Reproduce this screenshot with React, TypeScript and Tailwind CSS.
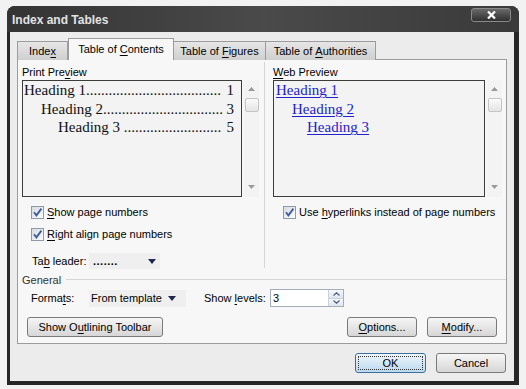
import React from "react";

const U = ({ children }: { children: React.ReactNode }) => (
  <span className="underline decoration-1 underline-offset-[2px]">{children}</span>
);

function Check() {
  return (
    <span className="w-[13px] h-[13px] border border-[#8f9aa6] bg-linear-to-br from-[#d8dce0] to-[#fbfbfb] flex items-center justify-center shrink-0">
      <svg width="11" height="11" viewBox="0 0 11 11">
        <path d="M2 5.2 L4.4 8.4 L9.4 1.6" fill="none" stroke="#3d5c9e" strokeWidth="1.8" />
      </svg>
    </span>
  );
}

function Arrow() {
  return (
    <svg width="8" height="5" viewBox="0 0 8 5" className="shrink-0">
      <path d="M0 0 H8 L4 5 Z" fill="#1f2a4f" />
    </svg>
  );
}

function VScroll() {
  return (
    <div className="w-[15px] h-[117px] bg-[#f3f3f3] flex flex-col items-center">
      <svg width="7" height="4" viewBox="0 0 7 4" className="mt-[7px]">
        <path d="M0 4 L3.5 0 L7 4 Z" fill="#9a9a9a" />
      </svg>
      <div className="mt-[7px] w-[14px] h-[14px] border border-[#c4c4c4] rounded-[2px] bg-linear-to-b from-[#fbfbfb] to-[#e4e4e4]" />
      <div className="flex-1" />
      <svg width="7" height="4" viewBox="0 0 7 4" className="mb-[8px]">
        <path d="M0 0 L3.5 4 L7 0 Z" fill="#9a9a9a" />
      </svg>
    </div>
  );
}

function TocRow({ indent, text, num }: { indent: number; text: string; num: string }) {
  return (
    <div className="flex h-[18.5px] items-center whitespace-nowrap leading-[18px]" style={{ paddingLeft: indent }}>
      <span>{text}</span>
      <span className="ml-auto">{num}</span>
    </div>
  );
}

function Btn({ children, w, primary }: { children: React.ReactNode; w: string; primary?: boolean }) {
  if (primary) {
    return (
      <div className={`${w} h-[20px] rounded-[3px] border border-[#3c6e9e] bg-linear-to-b from-[#eef6fc] to-[#bcd9ef] p-[2px]`}>
        <div className="w-full h-full border border-dotted border-[#333] flex items-center justify-center leading-[14px]">{children}</div>
      </div>
    );
  }
  return (
    <div className={`${w} h-[20px] rounded-[3px] border border-[#7a7a7a] bg-linear-to-b from-[#f6f6f6] to-[#d6d6d6] flex items-center justify-center leading-[14px]`}>
      {children}
    </div>
  );
}

export default function App() {
  return (
    <div
      className="w-[526px] h-[389px] bg-[#f2f2f2] pl-[7px] pt-[6px] text-[11px] leading-[14px] text-black"
      style={{ fontFamily: '"Liberation Sans", Arial, sans-serif' }}
    >
      <div className="w-[512px] h-[379px] rounded-t-[8px] bg-[#262626] flex flex-col pl-[3px] pr-[5px] pb-[4px]">
        {/* Title bar */}
        <div className="h-[26px] -ml-[3px] -mr-[5px] rounded-t-[8px] bg-linear-to-r from-[#343434] via-[#4a4a4a] to-[#3a3a3a] flex items-start justify-between">
          <span className="pl-[5px] mt-[6px] text-[12px] font-bold text-[#e2e2e2] leading-[16px]">Index and Tables</span>
          <div className="mt-[2px] mr-[8px] w-[40px] h-[14px] rounded-[3px] border border-[#8a8a8a] bg-linear-to-b from-[#6a6a6a] to-[#303030] flex items-center justify-center">
            <svg width="9" height="8" viewBox="0 0 9 8">
              <path d="M1 0.5 L8 7.5 M8 0.5 L1 7.5" stroke="#ffffff" strokeWidth="2.2" />
            </svg>
          </div>
        </div>
        {/* Client */}
        <div className="flex-1 bg-[#ececec] pl-[7px] pr-[7px] pt-[6px] flex flex-col">
          {/* Tabs */}
          <div className="h-[22px] flex items-end -mb-px relative z-10">
            <div className="w-[51px] h-[19px] border border-[#9c9c9c] border-b-0 bg-linear-to-b from-[#e6e6e6] to-[#cfcfcf] flex items-center justify-center">
              Inde<U>x</U>
            </div>
            <div className="w-[106px] h-[22px] border border-[#9c9c9c] border-b-0 bg-[#f7f7f7] flex items-center justify-center pb-[2px]">
              Table of&nbsp;<U>C</U>ontents
            </div>
            <div className="w-[92px] h-[19px] border border-[#9c9c9c] border-b-0 border-l-0 bg-linear-to-b from-[#e6e6e6] to-[#cfcfcf] flex items-center justify-center">
              Table of&nbsp;<U>F</U>igures
            </div>
            <div className="w-[110px] h-[19px] border border-[#9c9c9c] border-b-0 border-l-0 bg-linear-to-b from-[#e6e6e6] to-[#cfcfcf] flex items-center justify-center">
              Table of&nbsp;<U>A</U>uthorities
            </div>
          </div>
          {/* Panel */}
          <div className="w-[490px] h-[285px] border border-[#9c9c9c] bg-[#f7f7f7] flex flex-col">
            <div className="h-[210px] flex">
              {/* Left column */}
              <div className="w-[246px] pl-[4px] pt-[4px] flex flex-col">
                <div className="h-[16px] leading-[16px]">
                  Print Pre<U>v</U>iew
                </div>
                <div className="flex gap-[2px]">
                  <div
                    className="w-[220px] h-[117px] border border-[#3c3c3c] bg-[#f3f3f3] pl-[1px] pr-[7px] text-[15px] text-[#111]"
                    style={{ fontFamily: '"Liberation Serif", "Times New Roman", serif' }}
                  >
                    <TocRow indent={0} text={"Heading 1" + ".".repeat(36)} num="1" />
                    <TocRow indent={17} text={"Heading 2" + ".".repeat(32)} num="3" />
                    <TocRow indent={34} text={"Heading 3 " + ".".repeat(26)} num="5" />
                  </div>
                  <VScroll />
                </div>
                <div className="mt-[4px] h-[22px] pl-[9px] flex items-center gap-[3px]">
                  <Check />
                  <span>
                    <U>S</U>how page numbers
                  </span>
                </div>
                <div className="h-[22px] pl-[9px] flex items-center gap-[3px]">
                  <Check />
                  <span>
                    <U>R</U>ight align page numbers
                  </span>
                </div>
                <div className="mt-[8px] h-[16px] pl-[10px] flex items-center">
                  <span className="w-[57px]">
                    Ta<U>b</U> leader:
                  </span>
                  <div className="w-[71px] h-[16px] bg-[#efefef] flex items-center pl-[4px] pr-[4px] justify-between">
                    <span className="font-bold tracking-[0.5px]">.......</span>
                    <Arrow />
                  </div>
                </div>
              </div>
              {/* Separator */}
              <div className="w-px bg-[#d6d6d6] mt-[2px] mb-[2px]" />
              {/* Right column */}
              <div className="flex-1 pl-[8px] pt-[4px] flex flex-col">
                <div className="h-[16px] leading-[16px]">
                  <U>W</U>eb Preview
                </div>
                <div className="flex gap-[2px]">
                  <div
                    className="w-[212px] h-[117px] border border-[#3c3c3c] bg-[#f3f3f3] pl-[2px] text-[15px] leading-[18px] text-[#2222cc]"
                    style={{ fontFamily: '"Liberation Serif", "Times New Roman", serif' }}
                  >
                    <div className="h-[18.5px] flex items-center">
                      <span className="underline decoration-1 underline-offset-[2px]">Heading 1</span>
                    </div>
                    <div className="h-[18.5px] flex items-center pl-[16px]">
                      <span className="underline decoration-1 underline-offset-[2px]">Heading 2</span>
                    </div>
                    <div className="h-[18.5px] flex items-center pl-[31px]">
                      <span className="underline decoration-1 underline-offset-[2px]">Heading 3</span>
                    </div>
                  </div>
                  <VScroll />
                </div>
                <div className="mt-[4px] h-[22px] pl-[10px] flex items-center gap-[3px]">
                  <Check />
                  <span>
                    Use <U>h</U>yperlinks instead of page numbers
                  </span>
                </div>
              </div>
            </div>
            {/* General */}
            <div className="h-[19px] flex items-center pl-[4px]">
              <span className="text-[#333]">General</span>
              <div className="flex-1 h-px bg-[#d6d6d6] ml-[5px]" />
            </div>
            <div className="h-[18px] flex items-center pl-[13px]">
              <span className="w-[58px]">
                Forma<U>t</U>s:
              </span>
              <div className="w-[97px] h-[17px] bg-[#efefef] flex items-center justify-between pl-[2px] pr-[10px]">
                <span>From template</span>
                <Arrow />
              </div>
              <span className="ml-[18px] w-[66px]">
                Show <U>l</U>evels:
              </span>
              <div className="w-[74px] h-[18px] border border-[#a4adb8] bg-white flex items-center">
                <span className="flex-1 pl-[2px]">3</span>
                <div className="w-[15px] h-full flex flex-col border-l border-[#c9d2dc]">
                  <div className="flex-1 flex items-center justify-center bg-linear-to-b from-[#f5f7fa] to-[#dfe6ee] border-b border-[#c9d2dc]">
                    <svg width="7" height="4" viewBox="0 0 7 4">
                      <path d="M0.5 3.5 L3.5 0.8 L6.5 3.5" fill="none" stroke="#4a5a78" strokeWidth="1.2" />
                    </svg>
                  </div>
                  <div className="flex-1 flex items-center justify-center bg-linear-to-b from-[#f5f7fa] to-[#dfe6ee]">
                    <svg width="7" height="4" viewBox="0 0 7 4">
                      <path d="M0.5 0.5 L3.5 3.2 L6.5 0.5" fill="none" stroke="#4a5a78" strokeWidth="1.2" />
                    </svg>
                  </div>
                </div>
              </div>
            </div>
            <div className="mt-[10px] flex items-center pl-[9px] pr-[9px]">
              <Btn w="w-[136px]">
                <span>
                  Show O<U>u</U>tlining Toolbar
                </span>
              </Btn>
              <div className="flex-1" />
              <Btn w="w-[70px]">
                <span>
                  <U>O</U>ptions...
                </span>
              </Btn>
              <div className="w-[10px]" />
              <Btn w="w-[70px]">
                <span>
                  <U>M</U>odify...
                </span>
              </Btn>
            </div>
          </div>
          {/* OK / Cancel */}
          <div className="mt-[9px] flex justify-end pr-[1px] gap-[10px]">
            <Btn w="w-[71px]" primary>
              OK
            </Btn>
            <Btn w="w-[70px]">Cancel</Btn>
          </div>
        </div>
      </div>
    </div>
  );
}
